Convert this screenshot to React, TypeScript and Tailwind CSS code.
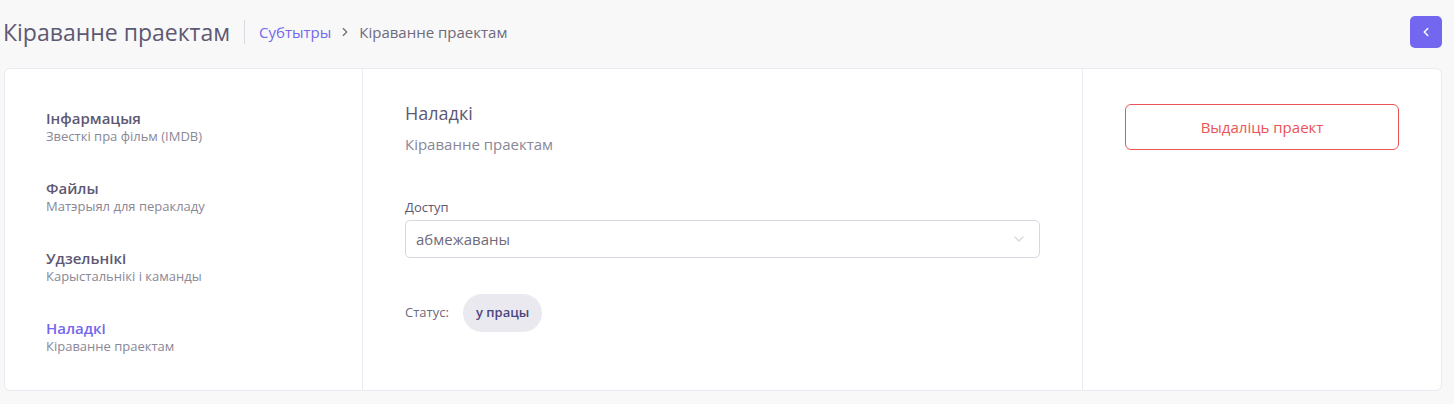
import { ChevronLeft, ChevronRight, ChevronDown } from 'lucide-react';

const navItems = [
  { title: 'Інфармацыя', subtitle: 'Звесткі пра фільм (IMDB)', active: false },
  { title: 'Файлы', subtitle: 'Матэрыял для перакладу', active: false },
  { title: 'Удзельнікі', subtitle: 'Карыстальнікі і каманды', active: false },
  { title: 'Наладкі', subtitle: 'Кіраванне праектам', active: true },
];

export default function App() {
  return (
    <div
      className="min-h-[404px] w-[1454px] bg-[#f8f8f8] text-[#6e6b7b]"
      style={{ fontFamily: '"Open Sans", "Noto Sans", sans-serif' }}
    >
      {/* Header */}
      <div className="flex h-[68px] items-center pb-[4px] pl-[3px] pr-3">
        <h1 className="text-[23px] font-normal leading-none text-[#5e5873]">Кіраванне праектам</h1>
        <div className="mx-[14px] h-[24px] w-px bg-[#d6dce1]" />
        <nav className="flex items-center text-[15px] text-[#6e6b7b]">
          <span className="text-[#7367f0]">Субтытры</span>
          <ChevronRight className="mx-[7px] h-[14px] w-[14px] text-[#6e6b7b]" strokeWidth={2} />
          <span>Кіраванне праектам</span>
        </nav>
        <button className="ml-auto flex h-[32px] w-[32px] items-center justify-center rounded-[5px] bg-[#7367f0] text-white">
          <ChevronLeft className="h-[14px] w-[14px]" strokeWidth={2.5} />
        </button>
      </div>

      {/* Card */}
      <div className="ml-[4px] mr-[12px] flex h-[323px] rounded-[6px] border border-[#ebe9f1] bg-white">
        {/* Left nav */}
        <div className="w-[358px] border-r border-[#ebe9f1] pl-[41px] pt-[39px]">
          {navItems.map((item) => (
            <div key={item.title} className="mb-[34px] flex flex-col">
              <span
                className={`text-[15px] font-semibold leading-[20px] ${
                  item.active ? 'text-[#7367f0]' : 'text-[#5e5873]'
                }`}
              >
                {item.title}
              </span>
              <span className="text-[13px] leading-[16px] text-[#8a8797]">{item.subtitle}</span>
            </div>
          ))}
        </div>

        {/* Middle */}
        <div className="w-[720px] border-r border-[#ebe9f1] px-[42px] pt-[33px]">
          <h2 className="text-[18px] font-normal leading-[22px] text-[#5e5873]">Наладкі</h2>
          <p className="mt-[10px] text-[15px] leading-[20px] text-[#8a8797]">Кіраванне праектам</p>

          <label className="mt-[45px] block text-[13px] leading-[16px] text-[#5e5873]">Доступ</label>
          <div className="mt-[5px] flex h-[38px] items-center justify-between rounded-[5px] border border-[#d8d6de] pl-[10px] pr-[12px]">
            <span className="text-[15px] text-[#6e6b7b]">абмежаваны</span>
            <ChevronDown className="h-[16px] w-[16px] text-[#d8d6de]" strokeWidth={2} />
          </div>

          <div className="mt-[36px] flex items-center">
            <span className="w-[58px] text-[13px] text-[#6e6b7b]">Статус:</span>
            <span className="flex h-[38px] items-center rounded-full bg-[#eae9f0] px-[13px] text-[13px] font-semibold text-[#4b4680]">
              у працы
            </span>
          </div>
        </div>

        {/* Right */}
        <div className="flex-1 px-[42px] pt-[35px]">
          <button className="flex h-[46px] w-full items-center justify-center rounded-[6px] border border-[#ea5455] text-[15px] text-[#ea5455]">
            Выдаліць праект
          </button>
        </div>
      </div>
    </div>
  );
}
